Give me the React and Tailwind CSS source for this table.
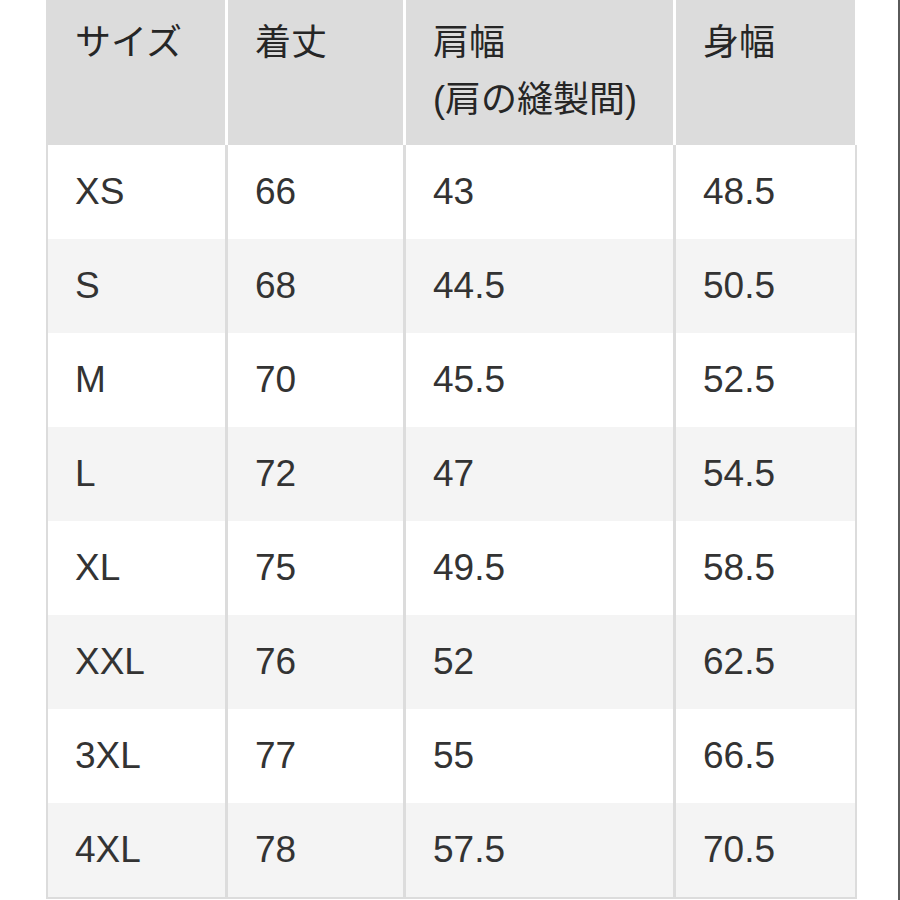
import React from "react";

const rows = [
  ["XS", "66", "43", "48.5"],
  ["S", "68", "44.5", "50.5"],
  ["M", "70", "45.5", "52.5"],
  ["L", "72", "47", "54.5"],
  ["XL", "75", "49.5", "58.5"],
  ["XXL", "76", "52", "62.5"],
  ["3XL", "77", "55", "66.5"],
  ["4XL", "78", "57.5", "70.5"],
];

const cols = "grid grid-cols-[177px_175px_267px_179px] gap-x-[3px]";

const App = () => {
  return (
    <div
      className="w-[900px] h-[900px] bg-white border-r-2 border-[#5a5a5a] overflow-hidden"
      style={{ fontFamily: '"Liberation Sans", "Noto Sans CJK JP", sans-serif' }}
    >
      <div className="ml-[46px] w-[811px]">
        {/* header */}
        <div className={`${cols} h-[145px] bg-white pl-[2px]`}>
          <div className="bg-[#dcdcdc] -ml-[2px] pl-[29px] pt-[14px] text-[36px] leading-[57px] text-[#262626]">
            サイズ
          </div>
          <div className="bg-[#dcdcdc] pl-[27px] pt-[14px] text-[36px] leading-[57px] text-[#262626]">
            着丈
          </div>
          <div className="bg-[#dcdcdc] pl-[27px] pt-[14px] text-[36px] leading-[57px] text-[#262626]">
            <div>肩幅</div>
            <div>(肩の縫製間)</div>
          </div>
          <div className="bg-[#dcdcdc] pl-[27px] pt-[14px] text-[36px] leading-[57px] text-[#262626]">
            身幅
          </div>
        </div>

        {/* body */}
        <div className="border-l-2 border-r-2 border-b-2 border-[#dcdcdc] bg-[#dcdcdc]">
          {rows.map((r, i) => (
            <div key={r[0]} className={`${cols} h-[94px]`}>
              {r.map((c, j) => (
                <div
                  key={j}
                  className={`${i % 2 === 0 ? "bg-white" : "bg-[#f4f4f4]"} flex items-center pl-[27px] text-[37px] text-[#333]`}
                >
                  {c}
                </div>
              ))}
            </div>
          ))}
        </div>
      </div>
    </div>
  );
};

export default App;
